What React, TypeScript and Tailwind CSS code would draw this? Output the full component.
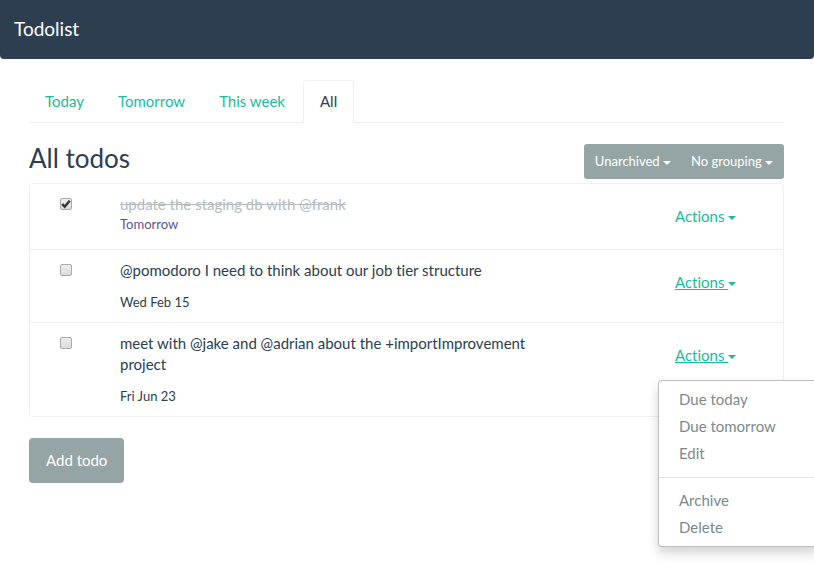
import { useState } from "react";

type Todo = {
  id: number;
  subject: string;
  due: string;
  completed: boolean;
  hovered: boolean;
  menuOpen: boolean;
};

const initialTodos: Todo[] = [
  { id: 1, subject: "update the staging db with @frank", due: "Tomorrow", completed: true, hovered: false, menuOpen: false },
  { id: 2, subject: "@pomodoro I need to think about our job tier structure", due: "Wed Feb 15", completed: false, hovered: true, menuOpen: false },
  { id: 3, subject: "meet with @jake and @adrian about the +importImprovement project", due: "Fri Jun 23", completed: false, hovered: true, menuOpen: true },
];

const tabs = ["Today", "Tomorrow", "This week", "All"];

function Caret() {
  return (
    <span
      aria-hidden="true"
      className="inline-block border-x-4 border-t-4 border-x-transparent border-t-current align-middle"
    />
  );
}

function ActionsMenu() {
  const item = "block w-full px-5 py-[3px] text-left whitespace-nowrap";
  return (
    <ul className="absolute top-full left-0 z-10 mt-[2px] w-40 rounded border border-black/25 bg-white py-[5px] text-[#7b8a8b] shadow-[0_6px_12px_rgba(0,0,0,0.175)]">
      <li><button className={item}>Due today</button></li>
      <li><button className={item}>Due tomorrow</button></li>
      <li><button className={item}>Edit</button></li>
      <li role="separator" className="mt-[10px] mb-[9px] h-px bg-[#e5e5e5]" />
      <li><button className={item}>Archive</button></li>
      <li><button className={item}>Delete</button></li>
    </ul>
  );
}

function TodoRow({ todo, onToggle }: { todo: Todo; onToggle: () => void }) {
  return (
    <tr className="border-t border-[#ecf0f1] align-top first:border-t-0">
      <td className="py-[10px] pl-[30px]">
        <span className="relative mt-1 block size-3">
          <input
            type="checkbox"
            aria-label={todo.subject}
            checked={todo.completed}
            onChange={onToggle}
            className="block size-3 appearance-none rounded-[2px] border border-[#a9a9a9] bg-linear-to-b from-[#eeeeee] to-[#dcdcdc]"
          />
          {todo.completed && (
            <svg viewBox="0 0 12 12" className="pointer-events-none absolute inset-0 size-3" aria-hidden="true">
              <path d="M2.2 6 L4.7 8.7 L9.7 2.8" fill="none" stroke="#333" strokeWidth="2.5" />
            </svg>
          )}
        </span>
      </td>
      <td className="py-[10px] pr-32">
        <p className={todo.completed ? "text-[#b4bcc2] line-through" : ""}>{todo.subject}</p>
        <p className={todo.completed ? "text-[13px] leading-[18px] text-[#5b5393]" : "mt-[11px] text-[13px] leading-5"}>{todo.due}</p>
      </td>
      <td className="py-[10px]">
        <div className="relative w-fit">
          <button className="block px-[17px] py-3 whitespace-nowrap text-[#18bc9c]">
            <span className={todo.hovered ? "underline" : ""}>
              Actions <Caret />
            </span>
          </button>
          {todo.menuOpen && <ActionsMenu />}
        </div>
      </td>
    </tr>
  );
}

export default function App() {
  const [todos, setTodos] = useState(initialTodos);
  const [tab, setTab] = useState("All");

  const toggle = (id: number) =>
    setTodos(todos.map((t) => (t.id === id ? { ...t, completed: !t.completed } : t)));

  return (
    <div className="min-h-screen overflow-x-clip bg-white font-[Lato,sans-serif] text-[15px] leading-[21px] text-[#2c3e50] [font-variant-ligatures:none]">
      <header className="mb-[21px] rounded-b bg-[#2c3e50] px-[14px] pt-[18px] pb-5">
        <a href="#" className="block w-fit text-[19px] text-white">Todolist</a>
      </header>

      <main className="pr-[30px] pl-[29px]">
        <nav className="flex gap-[2px] border-b border-[#ecf0f1]">
          {tabs.map((name) => (
            <a
              key={name}
              href="#"
              onClick={() => setTab(name)}
              className={
                name === tab
                  ? "-mb-px rounded-t border border-[#ecf0f1] border-b-white bg-white px-4 py-[10px]"
                  : "-mb-px border border-transparent px-[15px] py-[10px] text-[#18bc9c]"
              }
            >
              {name}
            </a>
          ))}
        </nav>

        <div className="mt-[21px] mb-1 flex items-start justify-between">
          <h1 className="text-[26px] leading-[29px]">All todos</h1>
          <div className="flex rounded-[3px] bg-[#95a5a6] text-[13px] text-white">
            <button className="py-[7px] pr-[9px] pl-[11px]">Unarchived <Caret /></button>
            <button className="py-[7px] pr-[11px] pl-[11px]">No grouping <Caret /></button>
          </div>
        </div>

        <div className="rounded border border-[#ecf0f1]">
          <table className="w-full table-fixed border-collapse">
            <colgroup>
              <col className="w-[90px]" />
              <col />
              <col className="w-[125px]" />
            </colgroup>
            <tbody>
              {todos.map((todo) => (
                <TodoRow key={todo.id} todo={todo} onToggle={() => toggle(todo.id)} />
              ))}
            </tbody>
          </table>
        </div>

        <button className="mt-[21px] rounded bg-[#95a5a6] px-[17px] py-3 text-white">Add todo</button>
      </main>
    </div>
  );
}
